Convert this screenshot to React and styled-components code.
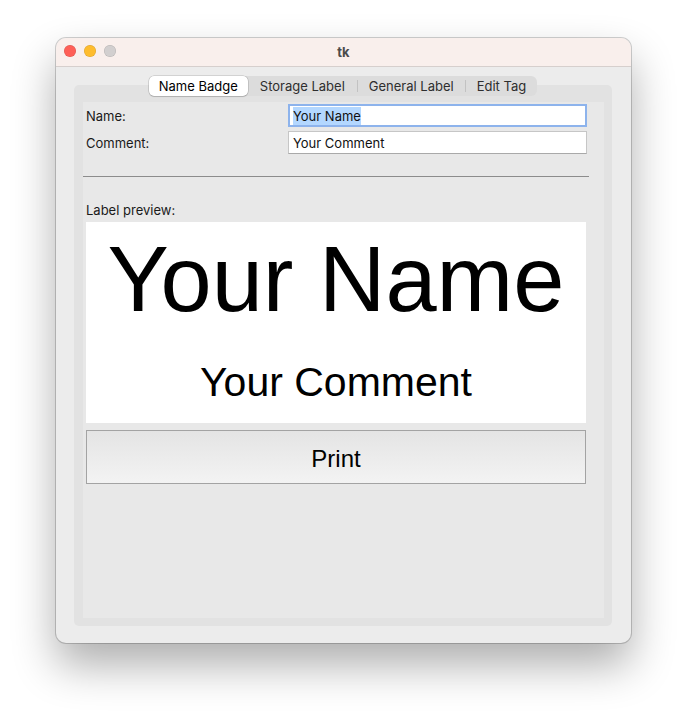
import React from 'react'
import styled, { createGlobalStyle } from 'styled-components'

const GlobalStyle = createGlobalStyle`
  html, body {
    margin: 0;
    padding: 0;
    background: #ffffff;
  }
  body {
    font-family: Inter, "Noto Sans", sans-serif;
  }
`

const Page = styled.div`
  padding: 38px 0 0 56px;
  height: 718px;
  box-sizing: border-box;
`

const Window = styled.div`
  width: 575px;
  height: 605px;
  border-radius: 10px;
  overflow: hidden;
  display: flex;
  flex-direction: column;
  background: #ececec;
  box-shadow: 0 22px 44px rgba(0, 0, 0, 0.32), 0 0 0 1px rgba(0, 0, 0, 0.18);
`

const TitleBar = styled.div`
  position: relative;
  height: 28px;
  flex: none;
  background: #f9efec;
  border-bottom: 1px solid #d6cfcd;
  display: flex;
  align-items: center;
  justify-content: center;
`

const Lights = styled.div`
  position: absolute;
  left: 8px;
  top: 7px;
  display: flex;
  gap: 8px;
`

const Light = styled.span`
  width: 12px;
  height: 12px;
  border-radius: 50%;
  background: ${p => p.color};
  box-shadow: inset 0 0 0 0.5px rgba(0, 0, 0, 0.15);
`

const Title = styled.div`
  font-size: 13px;
  font-weight: 700;
  color: #4b4b4b;
`

const Body = styled.div`
  flex: 1;
  display: flex;
  flex-direction: column;
  align-items: center;
  padding: 9px 19px 17px 18px;
`

const TabBar = styled.div`
  position: relative;
  z-index: 1;
  display: flex;
  align-items: center;
  height: 20px;
  background: #dcdcdc;
  border-radius: 6px;
  margin-bottom: -11px;
`

const Tab = styled.div`
  position: relative;
  height: 20px;
  box-sizing: border-box;
  display: flex;
  align-items: center;
  padding: 0 ${p => p.pad}px;
  font-size: 13px;
  color: ${p => (p.active ? '#000' : '#2e2e2e')};
  background: ${p => (p.active ? '#ffffff' : 'transparent')};
  border-radius: 5px;
  box-shadow: ${p => (p.active ? '0 0 0 0.5px rgba(0,0,0,0.22), 0 1px 1px rgba(0,0,0,0.12)' : 'none')};
`

const Divider = styled.span`
  width: 1px;
  height: 12px;
  background: #c2c2c2;
`

const Frame = styled.div`
  align-self: stretch;
  flex: 1;
  display: flex;
  background: #e2e2e2;
  border-radius: 5px;
  padding: 17px 8px 8px 9px;
`

const Content = styled.div`
  flex: 1;
  background: #e8e8e8;
  padding: 0 15px 0 0;
  display: flex;
  flex-direction: column;
`

const Form = styled.div`
  margin-top: 2px;
  display: grid;
  grid-template-columns: 205px 299px;
  row-gap: 4px;
  align-items: center;
`

const FieldLabel = styled.div`
  padding-left: 3px;
  font-size: 13px;
  color: #1a1a1a;
`

const Entry = styled.div`
  height: 23px;
  box-sizing: border-box;
  display: flex;
  align-items: center;
  padding-left: ${p => (p.focused ? 3 : 4)}px;
  background: #ffffff;
  font-size: 13px;
  color: #111;
  border: ${p => (p.focused ? '2px solid #8db3ec' : '1px solid #c6c6c6')};
  border-bottom-color: ${p => (p.focused ? '#8db3ec' : '#a9a9a9')};
`

const Selected = styled.span`
  background: #b3d7ff;
  padding: 1px 0;
`

const Separator = styled.div`
  margin-top: 22px;
  height: 1px;
  background: #8c8c8c;
`

const SectionLabel = styled.div`
  margin-top: 25px;
  padding-left: 3px;
  font-size: 13px;
  line-height: 16px;
  color: #1a1a1a;
`

const Preview = styled.div`
  margin: 4px 3px 0;
  height: 201px;
  background: #ffffff;
  display: flex;
  flex-direction: column;
  align-items: center;
  font-family: "Liberation Sans", Arial, sans-serif;
  color: #000;
`

const BigLine = styled.div`
  margin-top: 11px;
  font-size: 92px;
  line-height: 92px;
  white-space: nowrap;
`

const SmallLine = styled.div`
  margin-top: 37px;
  font-size: 41px;
  line-height: 41px;
  white-space: nowrap;
`

const PrintButton = styled.div`
  margin: 7px 3px 0;
  height: 54px;
  box-sizing: border-box;
  padding-top: 3px;
  border: 1px solid #a3a3a3;
  background: linear-gradient(#e4e4e4, #f3f3f3);
  display: flex;
  align-items: center;
  justify-content: center;
  font-family: "Liberation Sans", Arial, sans-serif;
  font-size: 24px;
  color: #000;
`

const tabs = [
  { label: 'Name Badge', pad: 10, active: true },
  { label: 'Storage Label', pad: 12 },
  { label: 'General Label', pad: 11 },
  { label: 'Edit Tag', pad: 11 },
]

export default function App() {
  return (
    <Page>
      <GlobalStyle />
      <Window>
        <TitleBar>
          <Lights>
            <Light color="#fe5f57" />
            <Light color="#febc2e" />
            <Light color="#d2cfcf" />
          </Lights>
          <Title>tk</Title>
        </TitleBar>
        <Body>
          <TabBar>
            {tabs.map((t, i) => (
              <React.Fragment key={t.label}>
                {i > 1 && <Divider />}
                <Tab active={t.active} pad={t.pad}>{t.label}</Tab>
              </React.Fragment>
            ))}
          </TabBar>
          <Frame>
            <Content>
              <Form>
                <FieldLabel>Name:</FieldLabel>
                <Entry focused>
                  <Selected>Your Name</Selected>
                </Entry>
                <FieldLabel>Comment:</FieldLabel>
                <Entry>Your Comment</Entry>
              </Form>
              <Separator />
              <SectionLabel>Label preview:</SectionLabel>
              <Preview>
                <BigLine>Your Name</BigLine>
                <SmallLine>Your Comment</SmallLine>
              </Preview>
              <PrintButton>Print</PrintButton>
            </Content>
          </Frame>
        </Body>
      </Window>
    </Page>
  )
}
